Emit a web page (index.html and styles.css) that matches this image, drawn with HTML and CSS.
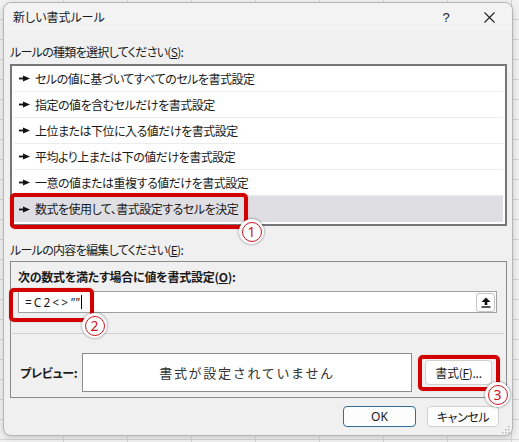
FILE: index.html
```html
<!DOCTYPE html>
<html lang="ja">
<head>
<meta charset="utf-8">
<title>新しい書式ルール</title>
<link rel="stylesheet" href="styles.css">
</head>
<body>
<div class="dialog">
  <div class="titlebar">
    <span class="title">新しい書式ルール</span>
    <span class="help">?</span>
    <span class="close"><svg width="11" height="11" viewBox="0 0 11 11"><path d="M0.5 0.5 L10.5 10.5 M10.5 0.5 L0.5 10.5" stroke="#222" stroke-width="1.1" fill="none"/></svg></span>
  </div>
  <div class="content">
    <div class="label">ルールの種類を選択してください(<u>S</u>):</div>
    <div class="listbox">
      <ul class="list">
        <li class="row"><svg class="ptr" width="11" height="7" viewBox="0 0 11 7"><rect x="0" y="2.6" width="5" height="1.8" fill="#111"/><polygon points="4,0.5 11,3.5 4,6.5" fill="#111"/></svg>セルの値に基づいてすべてのセルを書式設定</li>
        <li class="row"><svg class="ptr" width="11" height="7" viewBox="0 0 11 7"><rect x="0" y="2.6" width="5" height="1.8" fill="#111"/><polygon points="4,0.5 11,3.5 4,6.5" fill="#111"/></svg>指定の値を含むセルだけを書式設定</li>
        <li class="row"><svg class="ptr" width="11" height="7" viewBox="0 0 11 7"><rect x="0" y="2.6" width="5" height="1.8" fill="#111"/><polygon points="4,0.5 11,3.5 4,6.5" fill="#111"/></svg>上位または下位に入る値だけを書式設定</li>
        <li class="row"><svg class="ptr" width="11" height="7" viewBox="0 0 11 7"><rect x="0" y="2.6" width="5" height="1.8" fill="#111"/><polygon points="4,0.5 11,3.5 4,6.5" fill="#111"/></svg>平均より上または下の値だけを書式設定</li>
        <li class="row"><svg class="ptr" width="11" height="7" viewBox="0 0 11 7"><rect x="0" y="2.6" width="5" height="1.8" fill="#111"/><polygon points="4,0.5 11,3.5 4,6.5" fill="#111"/></svg>一意の値または重複する値だけを書式設定</li>
        <li class="row selected"><svg class="ptr" width="11" height="7" viewBox="0 0 11 7"><rect x="0" y="2.6" width="5" height="1.8" fill="#111"/><polygon points="4,0.5 11,3.5 4,6.5" fill="#111"/></svg>数式を使用して、書式設定するセルを決定</li>
      </ul>
      <div class="mark mark1"></div>
      <div class="badge badge1"><span>1</span></div>
    </div>
    <div class="label label2">ルールの内容を編集してください(<u>E</u>):</div>
    <div class="panel">
      <div class="plabel">次の数式を満たす場合に値を書式設定(<u>O</u>):</div>
      <div class="input">
        <span class="formula">=C2&lt;&gt;<span class="quotes">""</span></span><span class="caret"></span>
        <span class="collapse"><svg width="10" height="11" viewBox="0 0 10 11"><polygon points="5,0.5 9.5,5 6.3,5 6.3,8 3.7,8 3.7,5 0.5,5" fill="#111"/><rect x="0.5" y="9.3" width="9" height="1.4" fill="#111"/></svg></span>
        <div class="mark mark2"></div>
        <div class="badge badge2"><span>2</span></div>
      </div>
      <div class="sep"></div>
      <div class="preview-row">
        <span class="plabel prev-label">プレビュー:</span>
        <div class="preview">書式が設定されていません</div>
        <div class="fmt">書式(<u>F</u>)...
          <div class="mark mark3"></div>
          <div class="badge badge3"><span>3</span></div>
        </div>
      </div>
    </div>
    <div class="buttons">
      <div class="btn ok">OK</div>
      <div class="btn cancel">キャンセル</div>
    </div>
  </div>
  <svg class="grip" width="8" height="8" viewBox="0 0 8 8"><g fill="#b8b8b8"><rect x="6" y="0" width="1.5" height="1.5"/><rect x="3" y="3" width="1.5" height="1.5"/><rect x="6" y="3" width="1.5" height="1.5"/><rect x="0" y="6" width="1.5" height="1.5"/><rect x="3" y="6" width="1.5" height="1.5"/><rect x="6" y="6" width="1.5" height="1.5"/></g></svg>
</div>
</body>
</html>
```
FILE: styles.css
```css
* { box-sizing: border-box; }
html, body { margin: 0; padding: 0; }
body {
  width: 519px;
  height: 442px;
  overflow: hidden;
  background-color: #f2f2f2;
  background-image:
    repeating-linear-gradient(to right, transparent 0, transparent 63px, #d6d6d6 63px, #d6d6d6 64px),
    repeating-linear-gradient(to bottom, transparent 0, transparent 19px, #d6d6d6 19px, #d6d6d6 20px);
  font-family: "Noto Sans CJK JP", "Noto Sans", sans-serif;
  font-size: 12px;
  color: #1a1a1a;
  font-feature-settings: "palt";
  padding: 2px 0 0 3px;
}
.dialog {
  position: relative;
  width: 510px;
  height: 434px;
  background: #f0f0f0;
  border: 1px solid #b4b4b4;
  border-radius: 8px;
  box-shadow: 0 2px 6px rgba(0,0,0,0.18);
}
.titlebar {
  height: 28px;
  display: flex;
  align-items: center;
  padding-left: 9px;
  background: #f3f3f3;
  border-radius: 8px 8px 0 0;
}
.title { flex: 1; font-size: 12px; line-height: 16px; }
.help { width: 10px; text-align: center; font-family: "Liberation Sans", sans-serif; font-size: 13px; margin-right: 33px; }
.close { width: 11px; height: 11px; display: flex; margin-right: 17px; }
.content { padding: 13px 5px 0 6px; }
.label { line-height: 16px; height: 16px; margin-bottom: 4px; letter-spacing: -0.7px; }
.label2 { margin-top: 16px; margin-bottom: 3px; }
u { text-decoration: underline; text-underline-offset: 1px; }
.listbox {
  position: relative;
  border: 2px solid #767676;
  background: #fff;
  padding: 0 2px 2px 2px;
}
.list { list-style: none; margin: 0; padding: 0; }
.row {
  height: 26px;
  display: flex;
  align-items: center;
  padding-left: 5px;
  border-bottom: 1px solid #ececec;
  line-height: 16px;
  letter-spacing: -0.5px;
}
.row.selected { border-bottom: none; background: #dedee3; }
.ptr { margin-right: 5px; flex: none; }
.mark {
  position: absolute;
  border: 4px solid #d20000;
  border-radius: 5px;
  box-shadow: 0 0 1px rgba(120,0,0,0.5);
  z-index: 2;
}
.badge {
  position: absolute;
  width: 25px;
  height: 25px;
  border-radius: 50%;
  background: #fff;
  box-shadow: 0 0 2px 1px rgba(0,0,0,0.22);
  display: flex;
  align-items: center;
  justify-content: center;
  z-index: 3;
}
.badge span {
  width: 20px;
  height: 20px;
  border-radius: 50%;
  border: 1.2px solid #c8141e;
  color: #c8141e;
  font-family: "Noto Sans", sans-serif;
  font-size: 14px;
  line-height: 17px;
  text-align: center;
  letter-spacing: 0;
}
.mark1 { left: -2px; top: 127px; width: 238px; height: 36px; }
.badge1 { left: 227px; top: 153px; }
.panel {
  border: 1px solid #8c8c8c;
  padding: 7px 9px 5px 7px;
}
.plabel { font-weight: bold; line-height: 16px; height: 16px; letter-spacing: -0.25px; }
.input {
  position: relative;
  margin-top: 6px;
  height: 22px;
  background: #fff;
  border: 1px solid #a0a0a0;
  display: flex;
  align-items: center;
  padding: 0 1px 0 6px;
}
.formula { font-family: "Noto Sans", sans-serif; font-size: 12px; letter-spacing: 2px; font-feature-settings: normal; }
.quotes { letter-spacing: 0; font-style: italic; margin-left: 0; }
.caret { width: 1px; height: 14px; background: #000; margin-left: 2px; }
.collapse {
  margin-left: auto;
  width: 19px;
  height: 19px;
  border: 1px solid #c4c4c4;
  border-radius: 3px;
  background: #fdfdfd;
  display: flex;
  align-items: center;
  justify-content: center;
}
.mark2 { left: -10px; top: -4px; width: 85px; height: 34px; }
.badge2 { left: 63px; top: 21px; }
.sep { height: 1px; background: #d2d2d2; margin: 20px -7px 0 -6px; }
.preview-row { display: flex; align-items: center; margin-top: 19px; }
.prev-label { width: 64px; padding-left: 2px; }
.preview {
  width: 330px;
  height: 39px;
  background: #fff;
  border: 1px solid #8c8c8c;
  display: flex;
  align-items: center;
  justify-content: center;
  font-size: 13px;
  letter-spacing: 1.7px;
  color: #333;
  font-feature-settings: normal;
}
.fmt {
  position: relative;
  margin-left: 13px;
  width: 67px;
  height: 25px;
  background: #fff;
  border: 1px solid #d0d0d0;
  border-radius: 4px;
  display: flex;
  align-items: center;
  justify-content: center;
  letter-spacing: -0.3px;
}
.mark3 { left: -8px; top: -6px; width: 82px; height: 36px; }
.badge3 { left: 59px; top: 21px; }
.buttons { display: flex; justify-content: flex-end; gap: 11px; margin-top: 8px; padding-right: 8px; }
.btn {
  height: 21px;
  border-radius: 4px;
  background: #fdfdfd;
  border: 1px solid #d0d0d0;
  display: flex;
  align-items: center;
  justify-content: center;
}
.ok { width: 73px; border-color: #2f6f9f; font-family: "Noto Sans", sans-serif; }
.cancel { width: 72px; letter-spacing: -0.4px; }
.grip { position: absolute; right: 2px; bottom: 1px; }
```
